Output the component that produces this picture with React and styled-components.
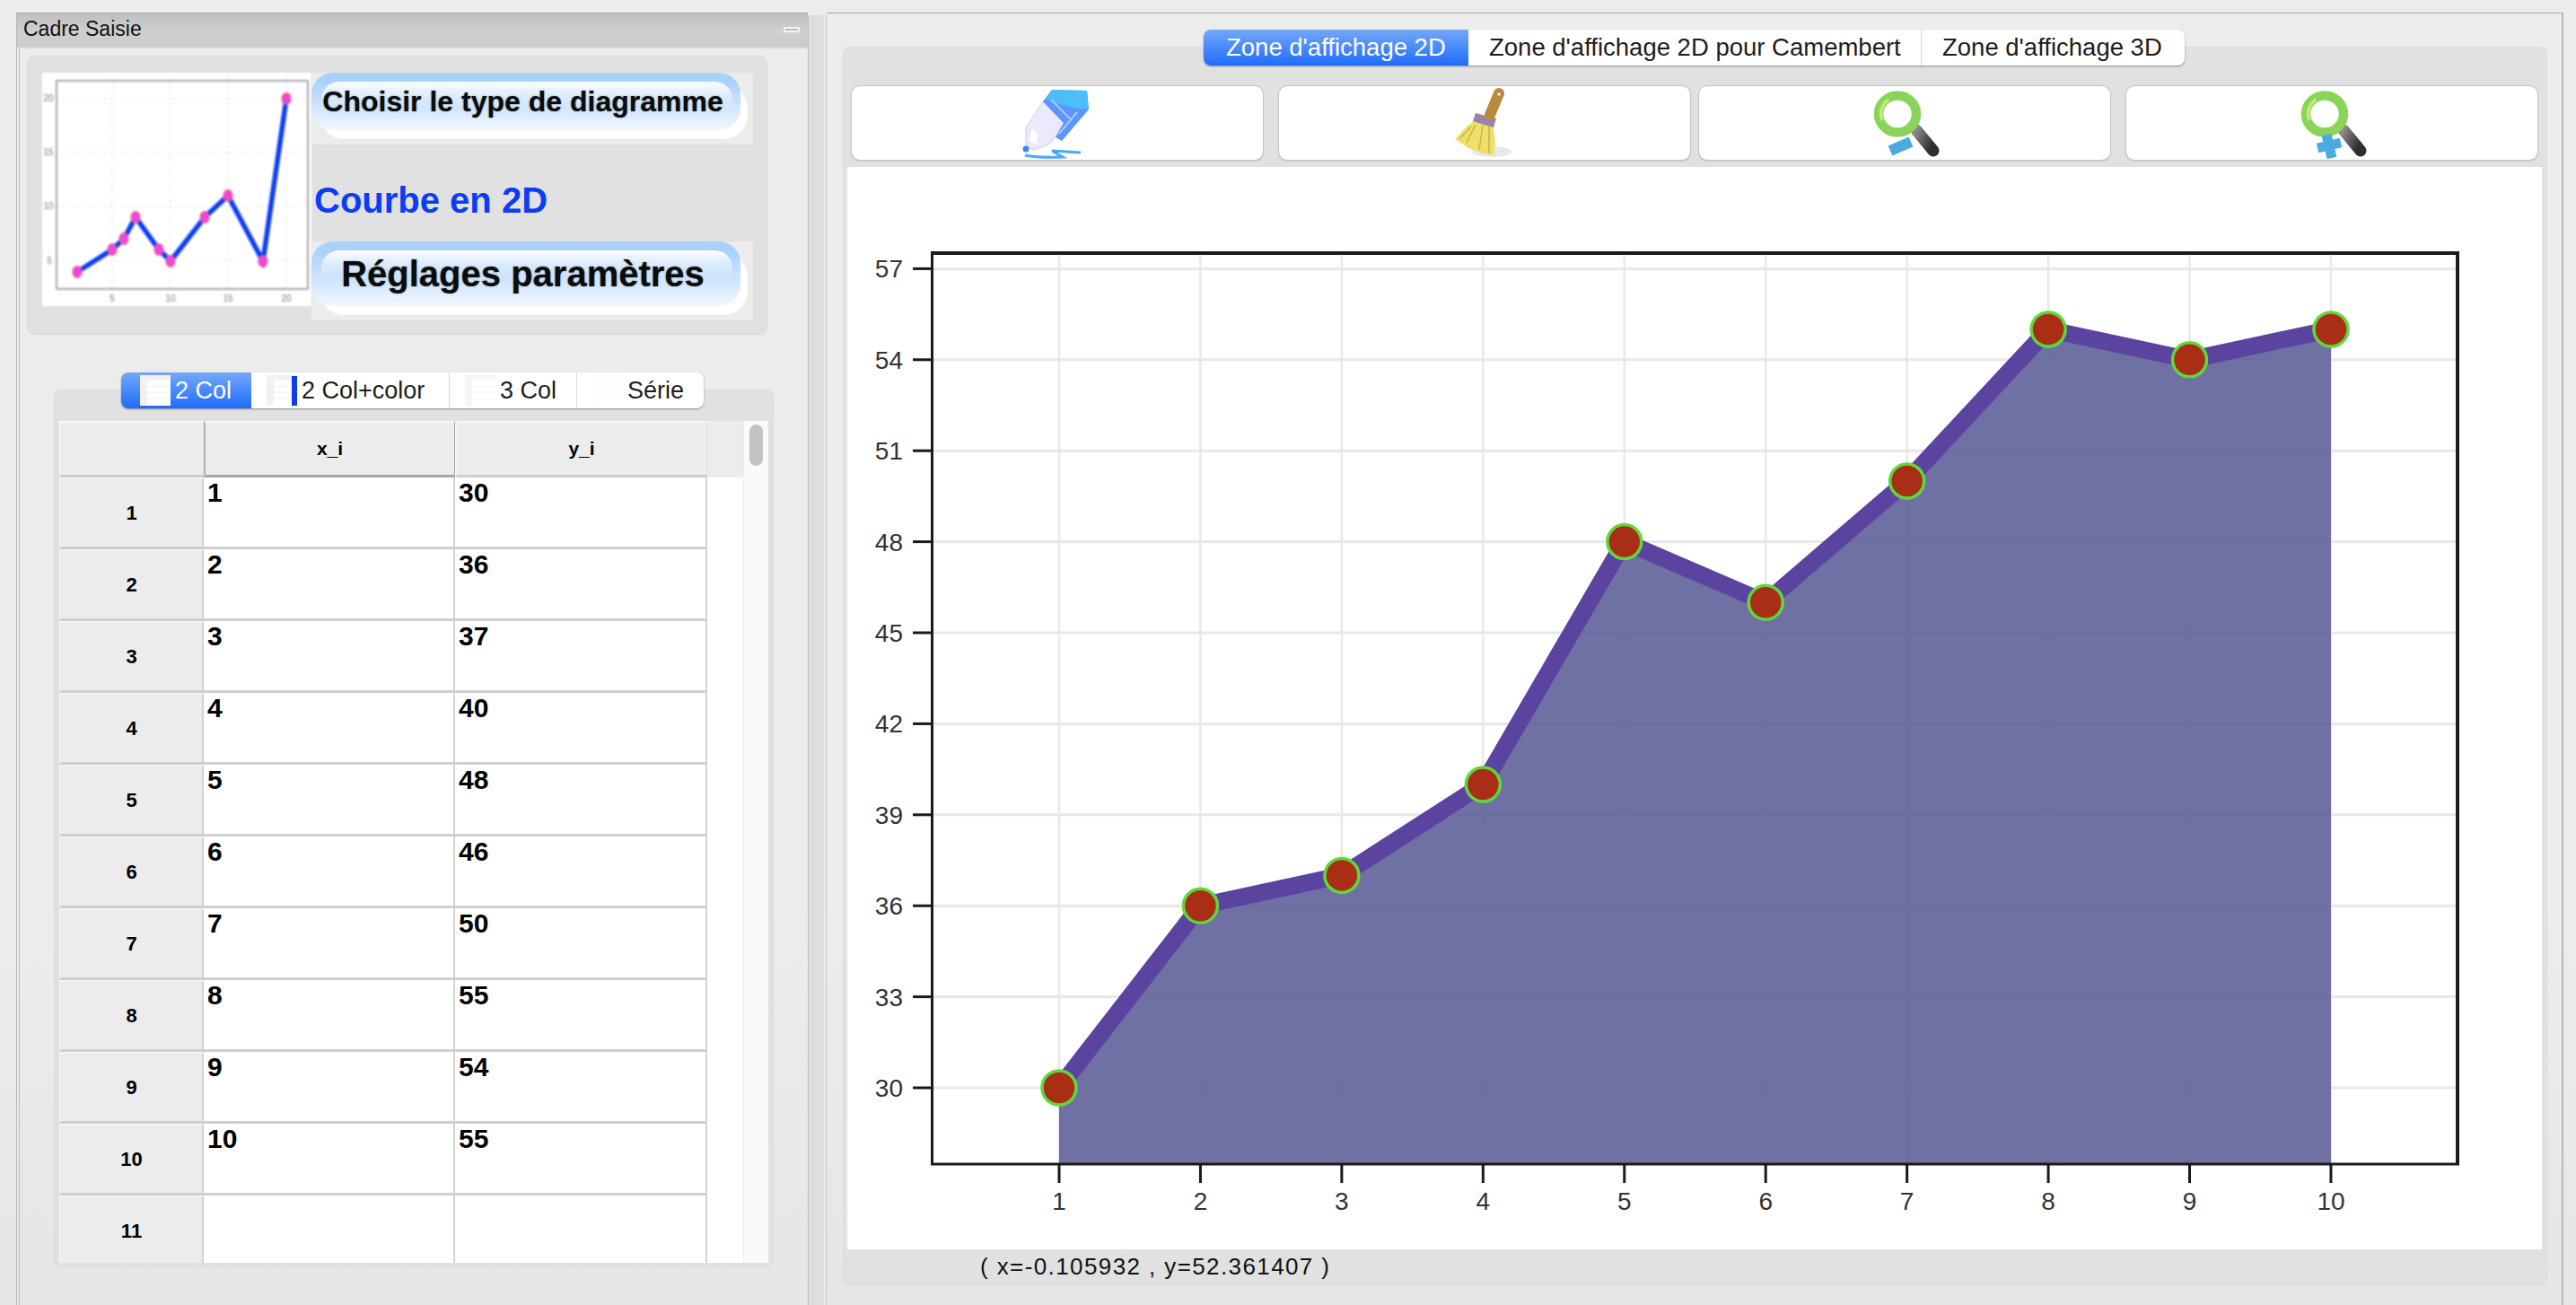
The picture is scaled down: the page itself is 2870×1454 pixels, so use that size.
import styled, { createGlobalStyle } from 'styled-components';

const GlobalStyle = createGlobalStyle`
  html, body {
    margin: 0;
    padding: 0;
    overflow: hidden;
    background: #ececec;
    font-family: "Liberation Sans", Arial, sans-serif;
  }
`;

const Page = styled.div`
  display: flex;
  width: 2870px;
  height: 1454px;
  box-sizing: border-box;
  padding: 14px 14px 0 18px;
  background: linear-gradient(#ececec 70%, #e6e6e6);
  overflow: hidden;
`;

const LeftDock = styled.section`
  width: 882px;
  flex: none;
  box-sizing: border-box;
  border-top: 1px solid #a9a9a9;
  border-left: 1px solid #b8b8b8;
`;

const TitleBar = styled.header`
  display: flex;
  align-items: center;
  justify-content: space-between;
  height: 39px;
  box-sizing: border-box;
  padding: 0 9px 2px 7px;
  background: linear-gradient(#bfbfbf, #d0d0d0 55%, #c9c9c9);
  border-bottom: 2px solid #d8d8d8;
  font-size: 23px;
  color: #111;
`;

const MinimizeIcon = styled.span`
  width: 18px;
  height: 6px;
  box-sizing: border-box;
  border: 2px solid #f4f4f4;
  background: #bcbcbc;
`;

const LeftBody = styled.div`
  height: 1400px;
  box-sizing: border-box;
  margin-left: 2px;
  padding-top: 8px;
  border-left: 1px solid #bcbcbc;
`;

const InputGroup = styled.div`
  display: flex;
  width: 825px;
  height: 311px;
  box-sizing: border-box;
  margin-left: 8px;
  padding: 18px 15px 0 16px;
  background: #e1e1e1;
  border: 1px solid #dadada;
  border-radius: 8px;
`;

const Thumb = styled.svg`
  flex: none;
  width: 300px;
  height: 260px;
  background: #fff;
  filter: blur(0.8px);
`;

const ThumbSide = styled.div`
  display: flex;
  flex-direction: column;
  width: 494px;
`;

const ImageButton = styled.div`
  position: relative;
  height: ${p => p.$height}px;
  background: #ececec;
  &::before {
    content: '';
    position: absolute;
    left: 10px;
    right: 6px;
    top: 14px;
    bottom: 6px;
    background: #fff;
    border-radius: 26px;
  }
`;

const PillFace = styled.div`
  position: relative;
  display: flex;
  align-items: center;
  justify-content: center;
  width: 478px;
  height: ${p => p.$height}px;
  box-sizing: border-box;
  padding-right: 7px;
  background: linear-gradient(#a9d2fb 15%, #c4dffb 45%, #dcecfd 75%, #f2f8ff);
  border-radius: 24px;
  &::before {
    content: '';
    position: absolute;
    left: 11px;
    right: 9px;
    top: 10px;
    height: 30px;
    border-radius: 20px 20px 0 0;
    background: linear-gradient(#ffffff, rgba(255, 255, 255, 0));
  }
`;

const PillText = styled.span`
  position: relative;
  font-size: ${p => p.$size}px;
  font-weight: bold;
  color: #0c0c0c;
  white-space: nowrap;
  text-shadow: 0 0 2px rgba(0, 0, 0, 0.45);
`;

const DiagramName = styled.div`
  display: flex;
  align-items: center;
  height: 108px;
  padding: 16px 0 0 3px;
  box-sizing: border-box;
  font-size: 40px;
  font-weight: bold;
  color: #0a3df4;
`;

const SegmentBar = styled.div`
  position: relative;
  z-index: 1;
  display: flex;
  width: fit-content;
  height: 40px;
  margin: ${p => p.$margin};
  border-radius: 8px;
  background: #fff;
  box-shadow: 0 1px 2px rgba(0, 0, 0, 0.4);
`;

const Segment = styled.div`
  display: flex;
  align-items: center;
  gap: 5px;
  width: ${p => p.$width}px;
  box-sizing: border-box;
  padding-left: ${p => p.$pad}px;
  font-size: ${p => p.$size}px;
  color: ${p => (p.$active ? '#fff' : '#1d1d1d')};
  white-space: nowrap;
  background: ${p => (p.$active ? 'linear-gradient(#74a8f9, #1f6cfb)' : 'transparent')};
  border-right: ${p => (p.$last || p.$active ? '0' : '1px solid #d8d8d8')};
  &:first-child { border-radius: 8px 0 0 8px; }
`;

const SeriesGroup = styled.div`
  width: 802px;
  height: 978px;
  box-sizing: border-box;
  margin-left: 38px;
  padding: 34px 5px 0 5px;
  background: #e1e1e1;
  border: 1px solid #dcdcdc;
  border-radius: 8px;
`;

const TableFrame = styled.div`
  display: flex;
  height: 938px;
  overflow: hidden;
`;

const TableGrid = styled.div`
  display: grid;
  grid-template-columns: 161px 280px 281px 40px;
  grid-template-rows: 63px;
  grid-auto-rows: 80px;
  flex: none;
  background: #fff;
`;

const HeaderCell = styled.div`
  display: flex;
  align-items: center;
  justify-content: center;
  box-sizing: border-box;
  padding-top: 0;
  background: #ececec;
  border-top: 2px solid #f7f7f7;
  border-left: 2px solid ${p => (p.$selected ? '#b4b4b4' : '#f5f5f5')};
  border-right: 1px solid ${p => (p.$selected ? '#a0a0a0' : '#e0e0e0')};
  border-bottom: 3px solid ${p => (p.$selected ? '#a8a8a8' : '#cdcdcd')};
  font-size: 21px;
  font-weight: bold;
  color: #000;
`;

const HeaderFill = styled.div`
  background: #ececec;
`;

const RowHeader = styled.div`
  display: flex;
  align-items: center;
  justify-content: center;
  box-sizing: border-box;
  background: #ececec;
  border-top: 2px solid #f5f5f5;
  border-left: 2px solid #f2f2f2;
  border-right: 2px solid #d4d4d4;
  border-bottom: 3px solid #cfcfcf;
  font-size: 22px;
  font-weight: bold;
  color: #000;
`;

const DataCell = styled.div`
  box-sizing: border-box;
  padding: 0 0 0 4px;
  background: #fff;
  border-right: 2px solid #d4d4d4;
  border-bottom: 3px solid #cfcfcf;
  font-size: 30px;
  font-weight: bold;
  line-height: 34px;
  color: #000;
`;

const TableEnd = styled.div`
  background: #fff;
`;

const ScrollTrack = styled.div`
  flex: none;
  width: 28px;
  box-sizing: border-box;
  padding: 4px 6px 0 6px;
  background: #fafafa;
  border-left: 1px solid #efefef;
`;

const ScrollThumb = styled.div`
  height: 46px;
  border-radius: 8px;
  background: #c3c3c3;
`;

const Splitter = styled.div`
  flex: none;
  width: 21px;
  margin-top: 3px;
  background: linear-gradient(90deg, #bdbdbd 0 1px, #dedede 1px 18px, #ececec 18px 20px, #c4c4c4 20px);
`;

const RightDock = styled.section`
  flex: 1;
  box-sizing: border-box;
  padding-top: 18px;
  border-top: 1px solid #a9a9a9;
  border-right: 2px solid #b8b8b8;
`;

const DisplayGroup = styled.div`
  width: 1899px;
  height: 1380px;
  box-sizing: border-box;
  margin-left: 18px;
  padding-top: 43px;
  background: #e1e1e1;
  border: 1px solid #dcdcdc;
  border-radius: 8px;
`;

const Toolbar = styled.div`
  display: flex;
  gap: 10px;
  padding-left: 9px;
`;

const ToolPair = styled.div`
  display: flex;
  gap: 18px;
`;

const ToolButton = styled.div`
  display: flex;
  justify-content: center;
  align-items: center;
  width: 458px;
  height: 82px;
  background: #fff;
  border-radius: 9px;
  box-shadow: 0 0 0 1px #c4c4c4, 0 1px 2px rgba(0, 0, 0, 0.35);
`;

const ToolIcon = styled.svg`
  width: 80px;
  height: 80px;
  filter: blur(0.4px);
`;

const PlotArea = styled.div`
  width: 1888px;
  height: 1206px;
  margin: 8px 0 0 4px;
  background: #fff;
`;

const PlotSvg = styled.svg`
  display: block;
  width: 1888px;
  height: 1206px;
  font-family: "Liberation Sans", Arial, sans-serif;
`;

const StatusLine = styled.div`
  height: 40px;
  padding-left: 152px;
  font-size: 26px;
  letter-spacing: 1.4px;
  line-height: 38px;
  color: #111;
  white-space: nowrap;
`;

const values = [30, 36, 37, 40, 48, 46, 50, 55, 54, 55];
const rows = values.map((v, i) => [i + 1, v]);
const yTicks = [30, 33, 36, 39, 42, 45, 48, 51, 54, 57];

const X = n => 1180 + (n - 1) * 157.44;
const Y = v => 1212 - (v - 30) * 33.8;
const linePoints = values.map((v, i) => `${X(i + 1)},${Y(v)}`).join(' ');

const thumbPoints = [
  [39, 222], [78, 197], [91, 185], [104, 161], [130, 197],
  [143, 210], [181, 161], [207, 137], [246, 210], [272, 29],
];

function DiagramThumb() {
  return (
    <Thumb viewBox="0 0 300 260">
      <g stroke="#d4d4d4" strokeWidth="1" strokeDasharray="2 4">
        <line x1="16" y1="29" x2="296" y2="29" />
        <line x1="16" y1="89" x2="296" y2="89" />
        <line x1="16" y1="149" x2="296" y2="149" />
        <line x1="16" y1="210" x2="296" y2="210" />
        <line x1="78" y1="4" x2="78" y2="241" />
        <line x1="143" y1="4" x2="143" y2="241" />
        <line x1="207" y1="4" x2="207" y2="241" />
        <line x1="272" y1="4" x2="272" y2="241" />
      </g>
      <path d="M16 241 V9 H296 M16 241 H296 V9" fill="none" stroke="#a4a4a4" strokeWidth="2" />
      <polyline points={thumbPoints.map(p => p.join(',')).join(' ')} fill="none" stroke="#0a3cf5" strokeWidth="5.5" />
      {thumbPoints.map(([x, y]) => (
        <ellipse key={x} cx={x} cy={y} rx="5" ry="6.5" fill="#ee45e0" stroke="#f0607c" strokeWidth="1.2" />
      ))}
      <g fontSize="10" fill="#777" textAnchor="middle" fontFamily="Liberation Sans, sans-serif">
        <text x="78" y="255">5</text>
        <text x="143" y="255">10</text>
        <text x="207" y="255">15</text>
        <text x="272" y="255">20</text>
        <text x="7" y="32">20</text>
        <text x="7" y="92">15</text>
        <text x="7" y="152">10</text>
        <text x="8" y="213">5</text>
      </g>
    </Thumb>
  );
}

// small spreadsheet pictures inside the left tabs
function MiniGrid({ lines, bar }) {
  return (
    <svg width="34" height="34" viewBox="0 0 34 34" style={{ flex: 'none' }}>
      <rect width="34" height="34" fill="#fff" />
      <g opacity={lines}>
        <rect width="8" height="34" fill="#f0f0f0" />
        <rect width="34" height="6" fill="#f0f0f0" />
        <g stroke="#e8e8e8" strokeWidth="1">
          <line x1="0" y1="12" x2="34" y2="12" />
          <line x1="0" y1="19" x2="34" y2="19" />
          <line x1="0" y1="26" x2="34" y2="26" />
        </g>
      </g>
      {bar && <rect x="28" y="1" width="6" height="33" fill="#0d3df0" />}
    </svg>
  );
}

function PencilIcon() {
  return (
    <ToolIcon viewBox="0 0 80 80">
      <path d="M24 16 L5 45 L5 66 L15 70 L32 63 L47 40 Z" fill="#ebe9fa" stroke="#cfcde6" strokeWidth="1" />
      <path d="M9 60 L12 46 L18 52 L17 64 Z" fill="#fff" />
      <path d="M34 3 L73 4 L75 25 L45 60 L38 56 L47 40 L24 16 Z" fill="#5b96f8" />
      <path d="M34 3 L73 4 L75 25 Q52 24 27 13 Z" fill="#4cbffa" />
      <path d="M33 14 L56 37 M62 28 L42 52" stroke="#b9d3fb" strokeWidth="2" opacity="0.8" />
      <circle cx="5" cy="69" r="3.5" fill="#3f86f0" />
      <path d="M4 76 Q20 79 46 78 L34 71 L66 73" fill="none" stroke="#4aa6f8" strokeWidth="3" />
    </ToolIcon>
  );
}

function BroomIcon() {
  return (
    <ToolIcon viewBox="0 0 80 80">
      <ellipse cx="48" cy="72" rx="22" ry="6" fill="#d8d8d8" opacity="0.6" />
      <path d="M32 30 L52 34 L50 46 L52 62 L50 76 L38 74 L22 68 L7 58 L20 44 L28 38 Z" fill="#f0de6c" />
      <path d="M30 42 L20 62 M38 42 L34 70 M45 44 L45 74 M25 44 L12 58" stroke="#cdb643" strokeWidth="1.6" fill="none" />
      <path d="M30 29 L53 35 L50 45 L27 38 Z" fill="#9a82a8" />
      <path d="M56 7 L46 31" stroke="#b98a3c" strokeWidth="12" strokeLinecap="round" />
      <circle cx="56" cy="8" r="1.8" fill="#eee" />
    </ToolIcon>
  );
}

function ZoomIcon({ plus, id }) {
  return (
    <ToolIcon viewBox="0 0 80 80">
      <defs>
        <linearGradient id={id} x1="0" y1="0" x2="1" y2="0.6">
          <stop offset="0" stopColor="#8a8a8a" />
          <stop offset="1" stopColor="#2e2e2e" />
        </linearGradient>
      </defs>
      <path d="M53 48 L72 71" stroke={`url(#${id})`} strokeWidth="13" strokeLinecap="round" />
      <ellipse cx="32" cy="30" rx="21" ry="20.5" fill="none" stroke="#8bd45a" strokeWidth="10.5" />
      <path d="M15 37 A19 19 0 0 1 22 14" fill="none" stroke="#c3ea7c" strokeWidth="3.5" />
      {plus ? (
        <path d="M34 53 L40 79 M24 68 L50 62" stroke="#4aabdf" strokeWidth="11" />
      ) : (
        <path d="M24 71 L47 61" stroke="#4aabdf" strokeWidth="12" />
      )}
    </ToolIcon>
  );
}

function Chart() {
  return (
    <PlotSvg viewBox="944 186 1888 1206">
      <g stroke="#e8e8e8">
        {yTicks.map(v => (
          <line key={v} x1="1038" x2="2738" y1={Y(v)} y2={Y(v)} strokeWidth="3" />
        ))}
        {values.map((_, i) => (
          <line key={i} x1={X(i + 1)} x2={X(i + 1)} y1="282" y2="1297" strokeWidth="2.5" />
        ))}
      </g>
      <polygon points={`${X(1)},1297 ${linePoints} ${X(10)},1297`} fill="#565794" fillOpacity="0.85" />
      <polyline points={linePoints} fill="none" stroke="#5b44a0" strokeWidth="19" />
      <g stroke="#1a1a1a" strokeWidth="3">
        <line x1="1038.5" x2="1038.5" y1="280" y2="1298" />
        <line x1="1037" x2="2740" y1="1297" y2="1297" />
        <line x1="2738" x2="2738" y1="280" y2="1298" strokeWidth="4" />
        <line x1="1037" x2="2740" y1="282" y2="282" strokeWidth="4" />
        {yTicks.map(v => (
          <line key={v} x1="1017" x2="1038" y1={Y(v)} y2={Y(v)} />
        ))}
        {values.map((_, i) => (
          <line key={i} x1={X(i + 1)} x2={X(i + 1)} y1="1297" y2="1318" />
        ))}
      </g>
      {values.map((v, i) => (
        <circle key={i} cx={X(i + 1)} cy={Y(v)} r="19" fill="#a92e16" stroke="#5fd83c" strokeWidth="3.5" />
      ))}
      <g fontSize="28" fill="#333" textAnchor="end">
        {yTicks.map(v => (
          <text key={v} x="1006" y={Y(v) + 10}>{v}</text>
        ))}
      </g>
      <g fontSize="28" fill="#333" textAnchor="middle">
        {values.map((_, i) => (
          <text key={i} x={X(i + 1)} y="1348">{i + 1}</text>
        ))}
      </g>
    </PlotSvg>
  );
}

export default function App() {
  return (
    <Page>
      <GlobalStyle />
      <LeftDock>
        <TitleBar>
          Cadre Saisie
          <MinimizeIcon />
        </TitleBar>
        <LeftBody>
          <InputGroup>
            <DiagramThumb />
            <ThumbSide>
              <ImageButton $height={80}>
                <PillFace $height={64}>
                  <PillText $size={32}>Choisir le type de diagramme</PillText>
                </PillFace>
              </ImageButton>
              <DiagramName>Courbe en 2D</DiagramName>
              <ImageButton $height={88}>
                <PillFace $height={72}>
                  <PillText $size={40}>Réglages paramètres</PillText>
                </PillFace>
              </ImageButton>
            </ThumbSide>
          </InputGroup>

          <SegmentBar $margin="42px 0 -21px 113px">
            <Segment $active $width={145} $pad={21} $size={27}>
              <MiniGrid lines={0.8} />2 Col
            </Segment>
            <Segment $width={221} $pad={17} $size={27}>
              <MiniGrid lines={0.8} bar />2 Col+color
            </Segment>
            <Segment $width={142} $pad={17} $size={27}>
              <MiniGrid lines={0.5} />3 Col
            </Segment>
            <Segment $last $width={141} $pad={17} $size={27}>
              <MiniGrid lines={0.12} />Série
            </Segment>
          </SegmentBar>

          <SeriesGroup>
            <TableFrame>
              <TableGrid>
                <HeaderCell />
                <HeaderCell $selected>x_i</HeaderCell>
                <HeaderCell>y_i</HeaderCell>
                <HeaderFill />
                {rows.map(([n, v]) => [
                  <RowHeader key={`h${n}`}>{n}</RowHeader>,
                  <DataCell key={`x${n}`}>{n}</DataCell>,
                  <DataCell key={`y${n}`}>{v}</DataCell>,
                  <TableEnd key={`e${n}`} />,
                ])}
                <RowHeader>11</RowHeader>
                <DataCell />
                <DataCell />
                <TableEnd />
              </TableGrid>
              <ScrollTrack>
                <ScrollThumb />
              </ScrollTrack>
            </TableFrame>
          </SeriesGroup>
        </LeftBody>
      </LeftDock>

      <Splitter />

      <RightDock>
        <SegmentBar $margin="0 0 -21px 420px">
          <Segment $active $width={295} $pad={25} $size={27.5}>Zone d'affichage 2D</Segment>
          <Segment $width={505} $pad={23} $size={27.5}>Zone d'affichage 2D pour Camembert</Segment>
          <Segment $last $width={293} $pad={23} $size={27.5}>Zone d'affichage 3D</Segment>
        </SegmentBar>
        <DisplayGroup>
          <Toolbar>
            <ToolPair>
              <ToolButton><PencilIcon /></ToolButton>
              <ToolButton><BroomIcon /></ToolButton>
            </ToolPair>
            <ToolPair>
              <ToolButton><ZoomIcon id="zoomOut" /></ToolButton>
              <ToolButton><ZoomIcon id="zoomIn" plus /></ToolButton>
            </ToolPair>
          </Toolbar>
          <PlotArea>
            <Chart />
          </PlotArea>
          <StatusLine>( x=-0.105932 , y=52.361407 )</StatusLine>
        </DisplayGroup>
      </RightDock>
    </Page>
  );
}
